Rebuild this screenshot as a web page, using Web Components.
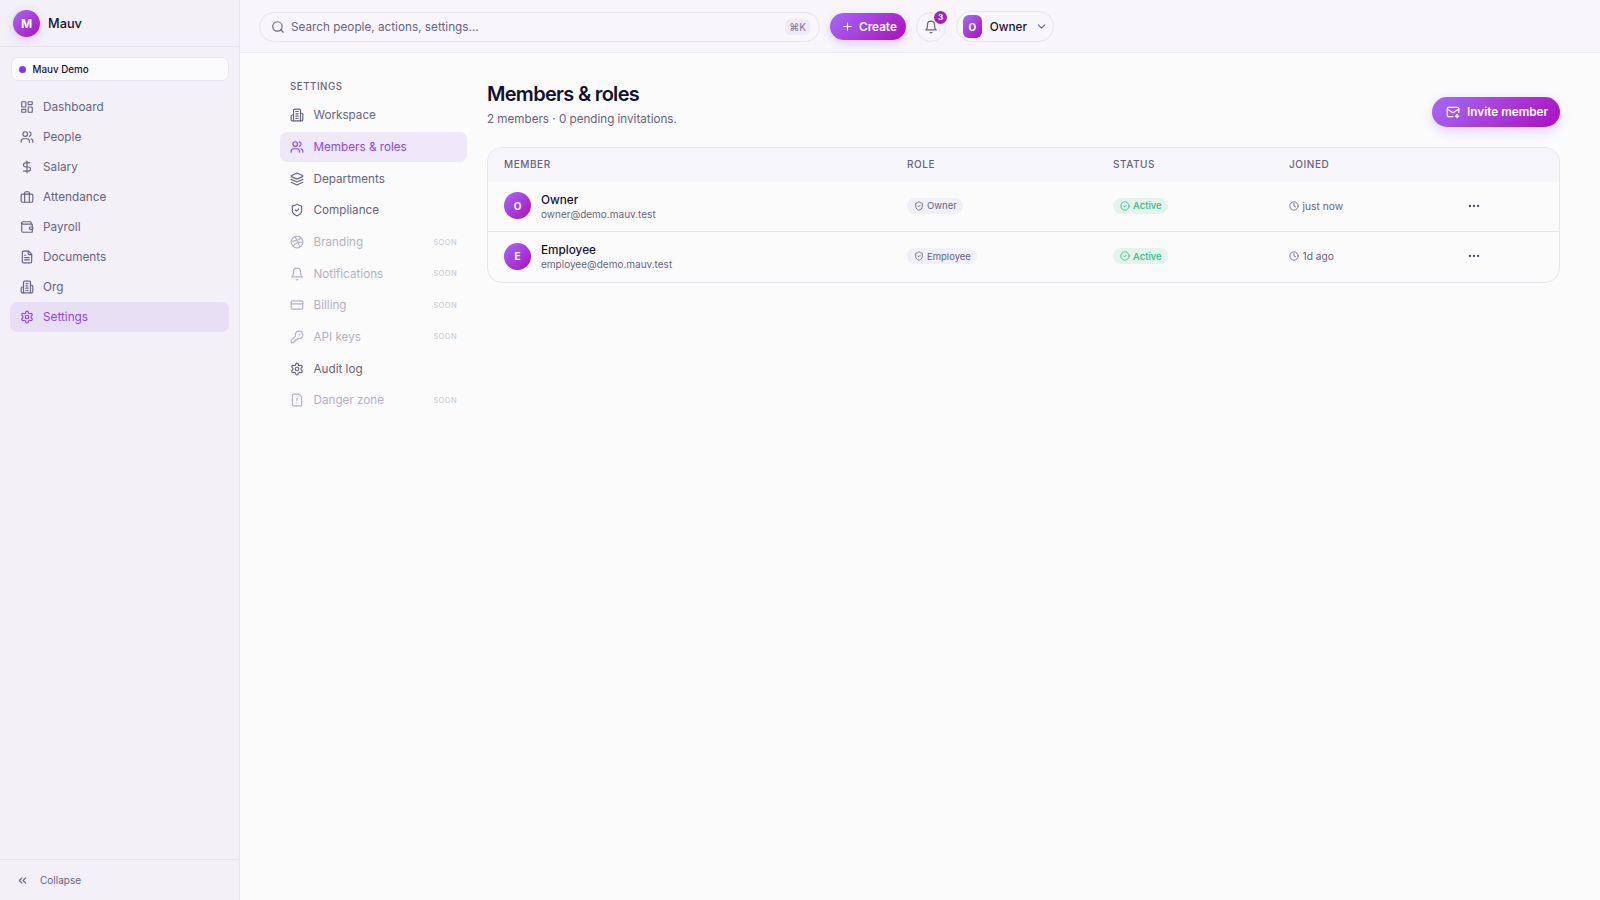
<!doctype html>
<html>
<head>
<meta charset="utf-8">
<title>Mauv</title>
<style>
  html, body { margin: 0; height: 100%; }
  body { font-family: Inter, "Noto Sans", sans-serif; background: #fbfbfc; color: #14122b; overflow: hidden; }
</style>
</head>
<body>
<mv-app></mv-app>
<script>
const ICONS = {
  dashboard: '<rect x="3" y="3" width="7" height="9" rx="1"/><rect x="14" y="3" width="7" height="5" rx="1"/><rect x="14" y="12" width="7" height="9" rx="1"/><rect x="3" y="16" width="7" height="5" rx="1"/>',
  users: '<path d="M16 21v-2a4 4 0 0 0-4-4H6a4 4 0 0 0-4 4v2"/><circle cx="9" cy="7" r="4"/><path d="M22 21v-2a4 4 0 0 0-3-3.87"/><path d="M16 3.13a4 4 0 0 1 0 7.75"/>',
  dollar: '<path d="M12 2v20"/><path d="M17 5H9.5a3.5 3.5 0 0 0 0 7h5a3.5 3.5 0 0 1 0 7H6"/>',
  briefcase: '<rect x="2" y="7" width="20" height="14" rx="2"/><path d="M16 21V5a2 2 0 0 0-2-2h-4a2 2 0 0 0-2 2v16"/>',
  wallet: '<path d="M19 7V4a1 1 0 0 0-1-1H5a2 2 0 0 0 0 4h15a1 1 0 0 1 1 1v4h-3a2 2 0 0 0 0 4h3a1 1 0 0 0 1-1v-2a1 1 0 0 0-1-1"/><path d="M3 5v14a2 2 0 0 0 2 2h15a1 1 0 0 0 1-1v-4"/>',
  file: '<path d="M15 2H6a2 2 0 0 0-2 2v16a2 2 0 0 0 2 2h12a2 2 0 0 0 2-2V7Z"/><path d="M14 2v4a2 2 0 0 0 2 2h4"/><path d="M10 9H8"/><path d="M16 13H8"/><path d="M16 17H8"/>',
  building: '<path d="M6 22V4a2 2 0 0 1 2-2h8a2 2 0 0 1 2 2v18Z"/><path d="M6 12H4a2 2 0 0 0-2 2v6a2 2 0 0 0 2 2h2"/><path d="M18 9h2a2 2 0 0 1 2 2v9a2 2 0 0 1-2 2h-2"/><path d="M10 6h4"/><path d="M10 10h4"/><path d="M10 14h4"/><path d="M10 18h4"/>',
  gear: '<path d="M12.22 2h-.44a2 2 0 0 0-2 2v.18a2 2 0 0 1-1 1.73l-.43.25a2 2 0 0 1-2 0l-.15-.08a2 2 0 0 0-2.73.73l-.22.38a2 2 0 0 0 .73 2.73l.15.1a2 2 0 0 1 1 1.72v.51a2 2 0 0 1-1 1.74l-.15.09a2 2 0 0 0-.73 2.73l.22.38a2 2 0 0 0 2.73.73l.15-.08a2 2 0 0 1 2 0l.43.25a2 2 0 0 1 1 1.73V20a2 2 0 0 0 2 2h.44a2 2 0 0 0 2-2v-.18a2 2 0 0 1 1-1.73l.43-.25a2 2 0 0 1 2 0l.15.08a2 2 0 0 0 2.73-.73l.22-.39a2 2 0 0 0-.73-2.73l-.15-.08a2 2 0 0 1-1-1.74v-.5a2 2 0 0 1 1-1.74l.15-.09a2 2 0 0 0 .73-2.73l-.22-.38a2 2 0 0 0-2.73-.73l-.15.08a2 2 0 0 1-2 0l-.43-.25a2 2 0 0 1-1-1.73V4a2 2 0 0 0-2-2z"/><circle cx="12" cy="12" r="3"/>',
  layers: '<path d="m12.83 2.18a2 2 0 0 0-1.66 0L2.6 6.08a1 1 0 0 0 0 1.83l8.58 3.91a2 2 0 0 0 1.66 0l8.58-3.9a1 1 0 0 0 0-1.83Z"/><path d="m22 17.65-9.17 4.16a2 2 0 0 1-1.66 0L2 17.65"/><path d="m22 12.65-9.17 4.16a2 2 0 0 1-1.66 0L2 12.65"/>',
  shield: '<path d="M20 13c0 5-3.5 7.5-7.66 8.95a1 1 0 0 1-.67-.01C7.5 20.5 4 18 4 13V6a1 1 0 0 1 1-1c2 0 4.5-1.2 6.24-2.72a1.17 1.17 0 0 1 1.52 0C14.51 3.81 17 5 19 5a1 1 0 0 1 1 1z"/><path d="m9 12 2 2 4-4"/>',
  ball: '<circle cx="12" cy="12" r="10"/><path d="M19.13 5.09C15.22 9.14 10 10.44 2.25 10.94"/><path d="M21.75 12.84c-6.62-1.41-12.14 1-16.38 6.32"/><path d="M8.56 2.75c4.37 6 6 9.42 8 17.72"/>',
  bell: '<path d="M6 8a6 6 0 0 1 12 0c0 7 3 9 3 9H3s3-2 3-9"/><path d="M10.3 21a1.94 1.94 0 0 0 3.4 0"/>',
  card: '<rect x="2" y="5" width="20" height="14" rx="2"/><path d="M2 10h20"/>',
  key: '<path d="M2.586 17.414A2 2 0 0 0 2 18.828V21a1 1 0 0 0 1 1h3a1 1 0 0 0 1-1v-1a1 1 0 0 1 1-1h1a1 1 0 0 0 1-1v-1a1 1 0 0 1 1-1h.172a2 2 0 0 0 1.414-.586l.814-.814a6.5 6.5 0 1 0-4-4z"/><circle cx="16.5" cy="7.5" r=".5" fill="currentColor"/>',
  warning: '<path d="M15 2H6a2 2 0 0 0-2 2v16a2 2 0 0 0 2 2h12a2 2 0 0 0 2-2V7Z"/><path d="M12 9v4"/><path d="M12 17h.01"/>',
  search: '<circle cx="11" cy="11" r="8"/><path d="m21 21-4.3-4.3"/>',
  plus: '<path d="M5 12h14"/><path d="M12 5v14"/>',
  chevron: '<path d="m6 9 6 6 6-6"/>',
  chevronsLeft: '<path d="m11 17-5-5 5-5"/><path d="m18 17-5-5 5-5"/>',
  mailPlus: '<path d="M22 13V6a2 2 0 0 0-2-2H4a2 2 0 0 0-2 2v12c0 1.1.9 2 2 2h8"/><path d="m22 7-8.97 5.7a1.94 1.94 0 0 1-2.06 0L2 7"/><path d="M19 16v6"/><path d="M16 19h6"/>',
  check: '<circle cx="12" cy="12" r="10"/><path d="m9 12 2 2 4-4"/>',
  clock: '<circle cx="12" cy="12" r="10"/><path d="M12 6v6l4 2"/>',
  dots: '<circle cx="12" cy="12" r="1"/><circle cx="19" cy="12" r="1"/><circle cx="5" cy="12" r="1"/>'
};
const svg = (name, size, sw = 2) => `<svg width="${size}" height="${size}" viewBox="0 0 24 24" fill="none" stroke="currentColor" stroke-width="${sw}" stroke-linecap="round" stroke-linejoin="round" style="flex:none;display:block">${ICONS[name]}</svg>`;
const GRAD = 'linear-gradient(135deg,#a36bf7 0%,#ad0fbe 100%)';
const COLS = '403px 206px 176px 178px 1fr';

class MvBase extends HTMLElement {
  connectedCallback() {
    const root = this.shadowRoot || this.attachShadow({ mode: "open" });
    root.innerHTML = this.html();
  }
}

class MvSidebar extends MvBase {
  html() {
    const items = [
      ["dashboard", "Dashboard"], ["users", "People"], ["dollar", "Salary"], ["briefcase", "Attendance"],
      ["wallet", "Payroll"], ["file", "Documents"], ["building", "Org"], ["gear", "Settings", true]
    ];
    return `
      <style>
        :host { display: flex; flex-direction: column; width: 240px; flex: none; box-sizing: border-box; height: 900px; background: #f3f0f8; border-right: 1px solid #e8e5ef; }
        .brand { display: flex; align-items: center; gap: 8px; height: 47px; padding: 1px 13px 0; box-sizing: border-box; border-bottom: 1px solid #e8e5ef; font-size: 12.75px; font-weight: 500; color: #14122b; }
        .logo { width: 27px; height: 27px; border-radius: 50%; background: ${GRAD}; color: #fff; display: flex; align-items: center; justify-content: center; font-size: 12px; font-weight: 700; box-shadow: 0 2px 8px rgba(150,70,230,.25); }
        .ws { margin: 10px 10px 0 11px; height: 24px; box-sizing: border-box; display: flex; align-items: center; gap: 6.5px; padding: 0 7px; background: #fbfbfd; border: 1px solid #e8e5ef; border-radius: 7px; font-size: 9.8px; font-weight: 500; color: #14122b; }
        .dot { width: 7px; height: 7px; border-radius: 50%; background: #7c3aed; }
        nav { display: flex; flex-direction: column; padding: 11px 10px 0; flex: 1; }
        a { display: flex; align-items: center; gap: 9px; height: 30px; padding: 0 10px; border-radius: 7px; font-size: 11.75px; color: #68637d; box-sizing: border-box; }
        a.on { background: #e8dff5; color: #8b46ec; }
        .collapse { height: 40px; border-top: 1px solid #e8e5ef; display: flex; align-items: center; gap: 11px; padding: 0 16px; font-size: 10px; color: #68637d; }
      </style>
      <div class="brand"><span class="logo">M</span>Mauv</div>
      <div class="ws"><span class="dot"></span>Mauv Demo</div>
      <nav>${items.map(([i, t, on]) => `<a class="${on ? "on" : ""}">${svg(i, 14)}${t}</a>`).join("")}</nav>
      <div class="collapse">${svg("chevronsLeft", 13)}Collapse</div>`;
  }
}

class MvTopbar extends MvBase {
  html() {
    return `
      <style>
        :host { display: flex; align-items: center; height: 53px; box-sizing: border-box; padding: 1px 20px 0 19px; background: #f8f6fb; border-bottom: 1px solid #eceaf2; }
        .search { width: 561px; height: 30px; box-sizing: border-box; display: flex; align-items: center; gap: 6px; padding: 0 9px 0 11px; border: 1px solid #e8e5ef; border-radius: 15px; font-size: 11.75px; color: #68637d; }
        .search span:nth-child(2) { flex: 1; }
        kbd { font: 400 10px Inter, sans-serif; color: #7d7994; background: #eeeafa; border-radius: 5px; padding: 2px 4px; }
        .create { margin-left: 10px; height: 27px; width: 76px; box-sizing: border-box; padding: 0 0 0 11px; border-radius: 14px; background: ${GRAD}; color: #fff; display: flex; align-items: center; gap: 5px; font-size: 11.75px; font-weight: 600; box-shadow: 0 3px 9px rgba(150,70,230,.25); }
        .bell { position: relative; margin-left: 10px; width: 30px; height: 30px; box-sizing: border-box; border: 1px solid #e8e5ef; border-radius: 50%; display: flex; align-items: center; justify-content: center; color: #68637d; }
        .badge { position: absolute; top: -2px; right: -2px; width: 13px; height: 13px; border-radius: 50%; background: #a31fc8; color: #fff; font-size: 8px; font-weight: 700; display: flex; align-items: center; justify-content: center; }
        .user { margin-left: 10px; height: 31px; width: 98px; box-sizing: border-box; border: 1px solid #e8e5ef; border-radius: 16px; display: flex; align-items: center; padding: 0 5px 0 6px; gap: 8px; font-size: 11.75px; font-weight: 500; color: #14122b; }
        .sq { width: 23px; height: 23px; border-radius: 6px; background: ${GRAD}; color: #fff; font-size: 10px; font-weight: 700; display: flex; align-items: center; justify-content: center; }
        .user .name { flex: 1; }
        .user svg { color: #68637d; }
      </style>
      <div class="search">${svg("search", 14)}<span>Search people, actions, settings...</span><kbd>⌘K</kbd></div>
      <div class="create">${svg("plus", 13)}Create</div>
      <div class="bell">${svg("bell", 14)}<span class="badge">3</span></div>
      <div class="user"><span class="sq">O</span><span class="name">Owner</span>${svg("chevron", 13)}</div>`;
  }
}

class MvSettingsNav extends MvBase {
  html() {
    const items = [
      ["building", "Workspace"], ["users", "Members & roles", "on"], ["layers", "Departments"], ["shield", "Compliance"],
      ["ball", "Branding", "soon"], ["bell", "Notifications", "soon"], ["card", "Billing", "soon"], ["key", "API keys", "soon"],
      ["gear", "Audit log"], ["warning", "Danger zone", "soon"]
    ];
    return `
      <style>
        :host { display: block; width: 187px; flex: none; }
        h2 { margin: 0; padding: 0 10px; height: 20px; line-height: 20px; font-size: 9.75px; font-weight: 500; letter-spacing: .5px; color: #68637d; }
        nav { display: flex; flex-direction: column; gap: 1.67px; margin-top: 3.4px; }
        a { display: flex; align-items: center; gap: 9.5px; height: 30px; padding: 0 10px; border-radius: 7px; font-size: 11.7px; color: #68637d; box-sizing: border-box; }
        a .t { flex: 1; }
        a.on { background: #efe8f9; color: #8b46ec; }
        a.soon { color: #b4b1c2; }
        small { font-size: 7.5px; letter-spacing: .4px; font-weight: 500; color: #cfcdd8; }
      </style>
      <h2>SETTINGS</h2>
      <nav>${items.map(([i, t, c]) => `<a class="${c || ""}">${svg(i, 14)}<span class="t">${t}</span>${c === "soon" ? "<small>SOON</small>" : ""}</a>`).join("")}</nav>`;
  }
}

class MvBadge extends MvBase {
  html() {
    const green = this.hasAttribute("green");
    return `
      <style>
        :host { display: inline-flex; align-items: center; gap: 3px; height: 16px; padding: 0 6px 0 7px; border-radius: 8px; font-size: 9.5px; font-weight: ${green ? 500 : 400}; background: ${green ? "#e3f4ec" : "#f1eff7"}; color: ${green ? "#2fb98a" : "#68637d"}; }
      </style>
      ${svg(green ? "check" : "shield", 10)}<slot></slot>`;
  }
}

class MvMemberRow extends MvBase {
  html() {
    const n = this.getAttribute("name");
    return `
      <style>
        :host { display: grid; grid-template-columns: ${COLS}; align-items: center; height: 50px; box-sizing: border-box; padding: 0 0 2px 16px; border-bottom: 1px solid #e8e5ef; }
        .m { display: flex; align-items: center; gap: 10px; }
        .av { width: 27px; height: 27px; border-radius: 50%; background: ${GRAD}; color: #fff; font-size: 10px; font-weight: 700; display: flex; align-items: center; justify-content: center; }
        .txt { padding-top: 2px; }
        .n { font-size: 11.75px; font-weight: 500; color: #14122b; line-height: 14px; }
        .e { font-size: 10px; color: #68637d; line-height: 14px; }
        .c { display: flex; }
        .j { display: flex; align-items: center; gap: 3.5px; font-size: 10.25px; color: #68637d; }
        .dots { color: #4a4760; }
      </style>
      <div class="m"><span class="av">${n[0]}</span><div class="txt"><div class="n">${n}</div><div class="e">${this.getAttribute("email")}</div></div></div>
      <div class="c"><mv-badge>${n}</mv-badge></div>
      <div class="c"><mv-badge green>Active</mv-badge></div>
      <div class="j">${svg("clock", 10)}${this.getAttribute("joined")}</div>
      <div class="dots">${svg("dots", 14)}</div>`;
  }
}

class MvMembers extends MvBase {
  html() {
    return `
      <style>
        :host { display: block; flex: 1; min-width: 0; }
        header { display: flex; justify-content: space-between; align-items: flex-start; height: 63px; }
        h1 { margin: 4px 0 0; font-size: 20px; font-weight: 600; letter-spacing: -.7px; line-height: 27px; color: #14122b; }
        p { margin: 3px 0 0; font-size: 11.65px; line-height: 16px; color: #68637d; }
        .invite { margin-top: 20px; height: 30px; width: 128px; box-sizing: border-box; padding: 0 0 0 14px; border-radius: 15px; background: ${GRAD}; color: #fff; display: flex; align-items: center; gap: 7px; font-size: 11.75px; font-weight: 600; box-shadow: 0 4px 12px rgba(150,70,230,.22); }
        .table { margin-top: 7px; border: 1px solid #e8e5ef; border-radius: 15px; overflow: hidden; }
        .head { display: grid; grid-template-columns: ${COLS}; align-items: center; height: 34px; box-sizing: border-box; padding: 0 0 3px 16px; background: #f7f6fa; font-size: 10px; font-weight: 500; letter-spacing: .55px; color: #68637d; }
        mv-member-row:last-of-type { border-bottom: 0; }
      </style>
      <header>
        <div><h1>Members &amp; roles</h1><p>2 members · 0 pending invitations.</p></div>
        <div class="invite">${svg("mailPlus", 14)}Invite member</div>
      </header>
      <div class="table">
        <div class="head"><span>MEMBER</span><span>ROLE</span><span>STATUS</span><span>JOINED</span><span></span></div>
        <mv-member-row name="Owner" email="owner@demo.mauv.test" joined="just now"></mv-member-row>
        <mv-member-row name="Employee" email="employee@demo.mauv.test" joined="1d ago"></mv-member-row>
      </div>`;
  }
}

class MvApp extends MvBase {
  html() {
    return `
      <style>
        :host { display: flex; width: 1600px; height: 900px; overflow: hidden; }
        .main { flex: 1; min-width: 0; display: flex; flex-direction: column; }
        .body { display: flex; gap: 20px; padding: 24px 40px 0 40px; }
      </style>
      <mv-sidebar></mv-sidebar>
      <div class="main">
        <mv-topbar></mv-topbar>
        <div class="body"><mv-settings-nav></mv-settings-nav><mv-members></mv-members></div>
      </div>`;
  }
}

customElements.define("mv-sidebar", MvSidebar);
customElements.define("mv-topbar", MvTopbar);
customElements.define("mv-settings-nav", MvSettingsNav);
customElements.define("mv-badge", MvBadge);
customElements.define("mv-member-row", MvMemberRow);
customElements.define("mv-members", MvMembers);
customElements.define("mv-app", MvApp);
</script>
</body>
</html>
